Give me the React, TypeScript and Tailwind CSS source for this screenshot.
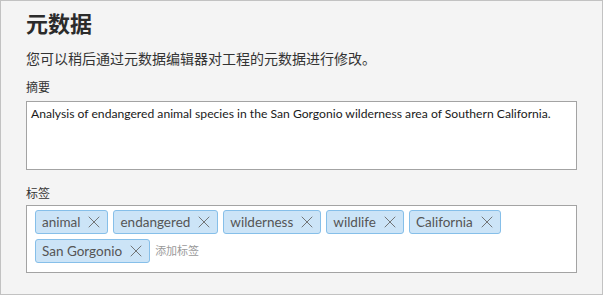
import { X } from 'lucide-react'

const tags = ['animal', 'endangered', 'wilderness', 'wildlife', 'California', 'San Gorgonio']

const font = "font-['Lato','Noto_Sans_CJK_SC',sans-serif]"

export default function App() {
  return (
    <div className={`h-[295px] w-[603px] border border-[#c2c2c2] bg-[#f4f4f4] px-[25px] pt-[8px] text-[#222] ${font}`}>
      <h1 className="text-[22px] font-bold leading-[30px] text-[#2b2b2b]">元数据</h1>

      <p className="mt-[10px] text-[14px] leading-[20px] text-[#333]">
        您可以稍后通过元数据编辑器对工程的元数据进行修改。
      </p>

      {/* Summary */}
      <label className="mt-[11px] block text-[12px] leading-[16px] text-[#333]">摘要</label>
      <div className="mt-[5px] h-[69px] w-[551px] border border-[#a3a3a3] bg-white px-[4px] py-[3px] text-[12.15px] leading-[18px] text-[#1a1a1a]">
        Analysis of endangered animal species in the San Gorgonio wilderness area of Southern California.
      </div>

      {/* Tags */}
      <label className="mt-[16px] block text-[12px] leading-[16px] text-[#333]">标签</label>
      <div className="mt-[3px] h-[68px] w-[551px] border border-[#a3a3a3] bg-white px-[8px] pt-[4px]">
        <div className="flex flex-wrap gap-[5px]">
          {tags.map((tag) => (
            <span
              key={tag}
              className="flex h-[24px] items-center gap-[4px] rounded-[3px] border border-[#86bfe9] bg-[#cce4f7] pl-[6px] pr-[3px] text-[13.5px] text-[#555]"
            >
              {tag}
              <X size={20} strokeWidth={1.1} className="text-[#6a6a6a]" />
            </span>
          ))}
          <span className="flex h-[24px] items-center text-[11px] text-[#9a9a9a]">添加标签</span>
        </div>
      </div>
    </div>
  )
}
